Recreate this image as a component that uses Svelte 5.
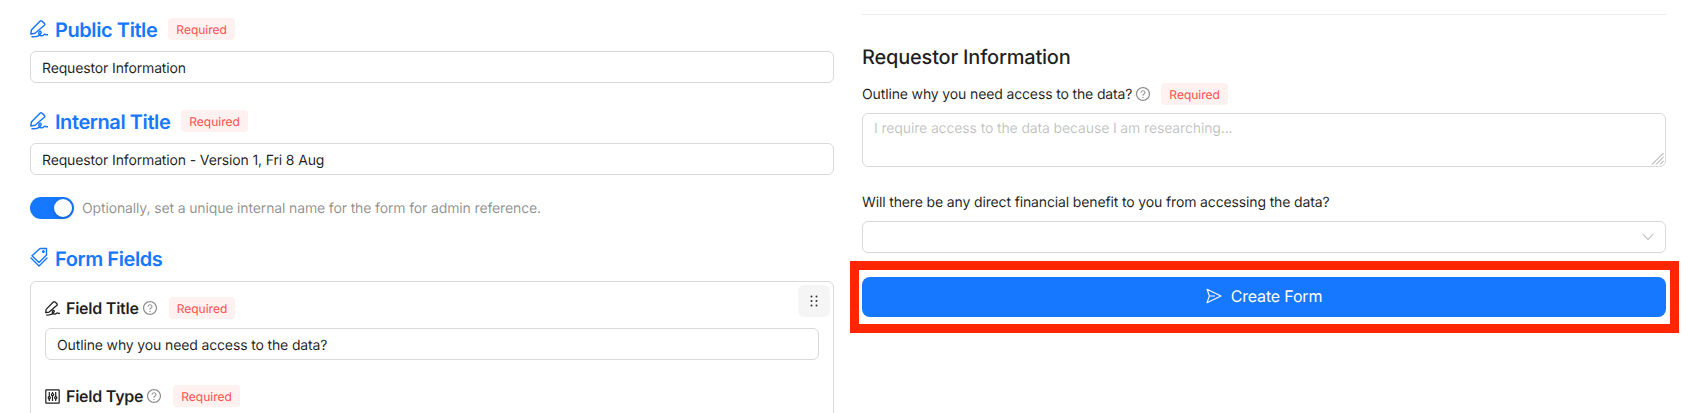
<script>
  const questionOuter = 'M512 64C264.6 64 64 264.6 64 512s200.6 448 448 448 448-200.6 448-448S759.4 64 512 64zm0 820c-205.4 0-372-166.6-372-372s166.6-372 372-372 372 166.6 372 372-166.6 372-372 372z'
  const questionMark = 'M623.6 316.7C593.6 290.4 554 276 512 276s-81.6 14.5-111.6 40.7C369.2 344 352 380.7 352 420v7.6c0 4.4 3.6 8 8 8h48c4.4 0 8-3.6 8-8V420c0-44.1 43.1-80 96-80s96 35.9 96 80c0 31.1-22 59.6-56.1 72.7-21.2 8.1-39.2 22.3-52.1 40.9-13.1 19-19.9 41.8-19.9 64.9V620c0 4.4 3.6 8 8 8h48c4.4 0 8-3.6 8-8v-22.7a48.3 48.3 0 0130.9-44.8c59-22.7 97.1-74.7 97.1-132.5.1-39.3-17.1-76-48.3-103.3zM472 732a40 40 0 1080 0 40 40 0 10-80 0z'
</script>

{#snippet signature(size)}
  <svg width={size} height={size} viewBox="0 0 18 18" fill="none" stroke="currentColor" stroke-width="1.5" stroke-linejoin="round" stroke-linecap="round">
    <path d="M0.8 14 L1.4 10 L10 1.2 Q11 0.5 12 1.2 L14.4 3.4 Q15.1 4.4 14.4 5.2 L5 13.3 Z" />
    <path d="M2 16.8 C6 17 10 15.5 11 13 C11.6 11 9.2 10.6 8.8 13 C8.4 16 12.5 16.6 14 14.6 C14.8 13.6 15.6 15 17.6 14.8" />
  </svg>
{/snippet}

{#snippet question()}
  <svg class="help" width="14" height="14" viewBox="64 64 896 896" fill="currentColor">
    <path d={questionOuter} />
    <path d={questionMark} />
  </svg>
{/snippet}

{#snippet required()}
  <span class="tag">Required</span>
{/snippet}

<div class="page">
  <section class="editor">
    <div class="title">
      {@render signature(18)}
      <h2>Public Title</h2>
      {@render required()}
    </div>
    <input class="field" value="Requestor Information" />

    <div class="title second">
      {@render signature(18)}
      <h2>Internal Title</h2>
      {@render required()}
    </div>
    <input class="field" value="Requestor Information - Version 1, Fri 8 Aug" />

    <div class="toggle-row">
      <span class="switch"><span class="knob"></span></span>
      <span class="hint">Optionally, set a unique internal name for the form for admin reference.</span>
    </div>

    <div class="title fields">
      <svg width="18" height="22" viewBox="0 0 18 22" fill="none" stroke="currentColor" stroke-width="1.4" stroke-linejoin="round" stroke-linecap="round">
        <path d="M10 1.5 H16.5 V8 L9 15.5 L2 8.8 Z" />
        <circle cx="13.4" cy="4.6" r="0.8" />
        <path d="M1 11 L9 19 L17 11" />
      </svg>
      <h2>Form Fields</h2>
    </div>

    <div class="card">
      <button class="drag" aria-label="Drag">
        <svg width="10" height="12" viewBox="0 0 10 12" fill="#333">
          <circle cx="2.5" cy="1.5" r="1" /><circle cx="7.5" cy="1.5" r="1" />
          <circle cx="2.5" cy="6" r="1" /><circle cx="7.5" cy="6" r="1" />
          <circle cx="2.5" cy="10.5" r="1" /><circle cx="7.5" cy="10.5" r="1" />
        </svg>
      </button>

      <div class="sub">
        {@render signature(15)}
        <h3>Field Title</h3>
        {@render question()}
        {@render required()}
      </div>
      <input class="field" value="Outline why you need access to the data?" />

      <div class="sub next">
        <svg width="15" height="15" viewBox="0 0 15 15" fill="none" stroke="currentColor" stroke-width="1.2">
          <rect x="0.8" y="0.8" width="13.4" height="13.4" rx="0.5" />
          <path d="M4.3 3 V12 M7.5 3 V12 M10.7 3 V12" />
          <circle cx="4.3" cy="8.8" r="1.1" fill="#fff" />
          <circle cx="7.5" cy="5.6" r="1.1" fill="#fff" />
          <circle cx="10.7" cy="8.8" r="1.1" fill="#fff" />
        </svg>
        <h3>Field Type</h3>
        {@render question()}
        {@render required()}
      </div>
    </div>
  </section>

  <section class="preview">
    <hr />
    <h2 class="form-name">Requestor Information</h2>

    <div class="label">
      <span>Outline why you need access to the data?</span>
      {@render question()}
      {@render required()}
    </div>
    <div class="area-wrap">
      <textarea class="area" placeholder="I require access to the data because I am researching..."></textarea>
      <svg class="grip" width="13" height="13" viewBox="0 0 13 13" stroke="#8c8c8c" stroke-width="0.9">
        <path d="M1 12.5 L12.5 1 M5 12.5 L12.5 5 M9 12.5 L12.5 9" />
      </svg>
    </div>

    <div class="label next-label">
      <span>Will there be any direct financial benefit to you from accessing the data?</span>
    </div>
    <div class="select">
      <svg width="12" height="8" viewBox="0 0 12 8" fill="none" stroke="#bfbfbf" stroke-width="1.1">
        <path d="M1 1.2 L6 6.6 L11 1.2" />
      </svg>
    </div>

    <div class="submit">
      <button class="create">
        <svg width="16" height="16" viewBox="0 0 16 16" fill="none" stroke="#fff" stroke-width="1.1" stroke-linejoin="round">
          <path d="M1 1.2 L15 8 L1 14.8 L3.4 8 Z M3.4 8 H9" />
        </svg>
        Create Form
      </button>
      <span class="highlight"></span>
    </div>
  </section>
</div>

<style>
  :global(body) {
    background: #fff;
    overflow: hidden;
  }

  .page {
    display: flex;
    gap: 28px;
    height: 413px;
    overflow: hidden;
    padding: 0 42px 0 30px;
    font-family: Inter, "Liberation Sans", sans-serif;
    font-size: 14px;
    letter-spacing: -0.14px;
    color: rgba(0, 0, 0, 0.88);
    text-rendering: geometricPrecision;
  }

  .editor,
  .preview {
    flex: 1;
    min-width: 0;
  }

  .editor {
    padding-top: 18px;
  }

  .title {
    display: flex;
    align-items: center;
    gap: 7px;
    height: 22px;
    margin-bottom: 11px;
    color: #1677ff;
  }

  .title h2 {
    margin: 0 4px 0 0;
    padding-top: 2px;
    font-size: 20px;
    font-weight: 600;
    letter-spacing: -0.42px;
  }

  .second {
    margin-top: 27px;
  }

  .fields {
    margin-top: 28px;
    margin-bottom: 12px;
  }

  .tag {
    display: inline-flex;
    align-items: center;
    height: 22px;
    padding: 0 8px;
    font-size: 12px;
    font-weight: 400;
    letter-spacing: 0;
    color: #ff4d4f;
    background: #fff1f0;
    border-radius: 4px;
  }

  .field {
    display: block;
    box-sizing: border-box;
    width: 100%;
    height: 32px;
    padding: 5px 11px 3px;
    font: inherit;
    letter-spacing: inherit;
    color: inherit;
    text-rendering: inherit;
    background: #fff;
    border: 1px solid #d9d9d9;
    border-radius: 6px;
    outline: none;
  }

  .toggle-row {
    display: flex;
    align-items: center;
    gap: 8px;
    margin-top: 22px;
  }

  .switch {
    display: flex;
    justify-content: flex-end;
    align-items: center;
    box-sizing: border-box;
    width: 44px;
    height: 22px;
    padding: 2px;
    background: #1677ff;
    border-radius: 11px;
  }

  .knob {
    width: 18px;
    height: 18px;
    background: #fff;
    border-radius: 50%;
    box-shadow: 0 2px 4px rgba(0, 35, 11, 0.2);
  }

  .hint {
    color: rgba(0, 0, 0, 0.45);
  }

  .card {
    position: relative;
    box-sizing: border-box;
    height: 200px;
    padding: 15px 14px;
    border: 1px solid #d9d9d9;
    border-radius: 6px;
  }

  .drag {
    position: absolute;
    top: 3px;
    right: 3px;
    display: flex;
    align-items: center;
    justify-content: center;
    width: 32px;
    height: 32px;
    padding: 0;
    background: #f5f5f5;
    border: none;
    border-radius: 6px;
  }

  .sub {
    display: flex;
    align-items: center;
    gap: 6px;
    height: 22px;
    margin-bottom: 9px;
  }

  .sub h3 {
    margin: 0;
    font-size: 16px;
    font-weight: 600;
    letter-spacing: -0.24px;
  }

  .sub .help {
    margin-left: -2px;
    margin-right: 6px;
  }

  .next {
    margin-top: 25px;
  }

  .help {
    flex: none;
    color: rgba(0, 0, 0, 0.45);
  }

  .preview hr {
    margin: 14px 0 0;
    border: none;
    border-top: 1px solid #ebebeb;
  }

  .form-name {
    margin: 30px 0 0;
    font-size: 20px;
    line-height: 24px;
    font-weight: 500;
    letter-spacing: -0.2px;
  }

  .label {
    display: flex;
    align-items: center;
    gap: 4px;
    height: 22px;
    margin-top: 14px;
    margin-bottom: 8px;
  }

  .label .help {
    margin-right: 7px;
  }

  .next-label {
    margin-top: 24px;
  }

  .area-wrap {
    position: relative;
  }

  .area {
    display: block;
    box-sizing: border-box;
    width: 100%;
    height: 54px;
    padding: 4px 11px;
    font: inherit;
    line-height: 22px;
    letter-spacing: inherit;
    text-rendering: inherit;
    border: 1px solid #d9d9d9;
    border-radius: 6px;
    outline: none;
    resize: none;
  }

  .area::placeholder {
    color: rgba(0, 0, 0, 0.25);
  }

  .grip {
    position: absolute;
    right: 2px;
    bottom: 2px;
  }

  .select {
    display: flex;
    align-items: center;
    justify-content: flex-end;
    box-sizing: border-box;
    height: 32px;
    padding-right: 11px;
    border: 1px solid #d9d9d9;
    border-radius: 6px;
  }

  .submit {
    position: relative;
    margin-top: 24px;
  }

  .create {
    display: flex;
    align-items: center;
    justify-content: center;
    gap: 9px;
    width: 100%;
    height: 40px;
    padding-bottom: 3px;
    font: inherit;
    font-size: 16px;
    letter-spacing: -0.18px;
    text-rendering: inherit;
    color: #fff;
    background: #1677ff;
    border: none;
    border-radius: 8px;
  }

  .highlight {
    position: absolute;
    inset: -16px -13px -16px -12px;
    border: 9px solid #ff2600;
    pointer-events: none;
  }
</style>
